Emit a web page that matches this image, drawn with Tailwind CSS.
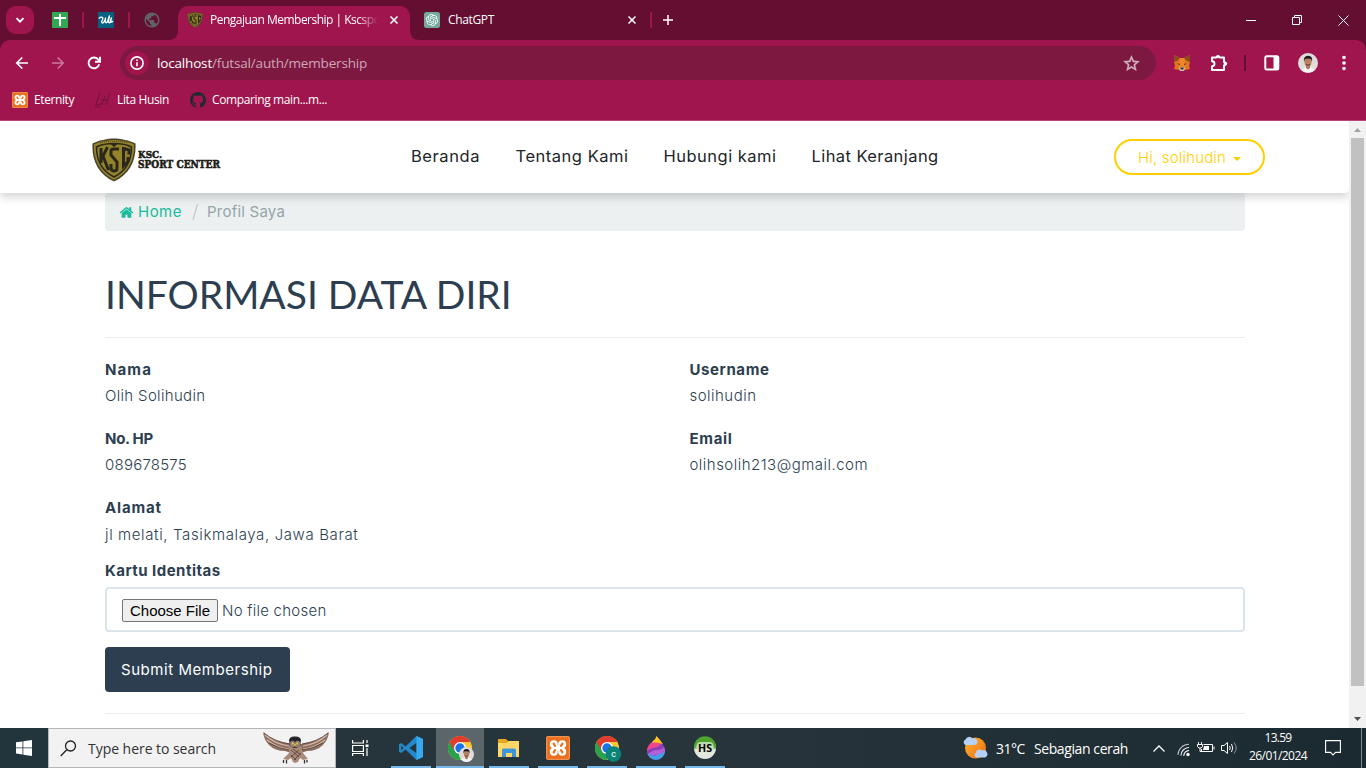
<!DOCTYPE html>
<html lang="id">
<head>
<meta charset="utf-8">
<title>Pengajuan Membership | Kscsport</title>
<script src="https://cdn.jsdelivr.net/npm/@tailwindcss/browser@4"></script>
</head>
<body class="w-[1366px] h-[768px] overflow-hidden bg-white flex flex-col whitespace-nowrap">
<svg width="0" height="0" class="absolute">
  <defs>
    <symbol id="shield" viewBox="0 0 44 44">
      <path d="M22 .5C28 .5 38 2.500 43.500 5.500C44.500 22 38 36 22 43.500C6 36-.5 22 .5 5.500C6 2.500 16 .5 22 .5Z" fill="#4b4527"/>
      <path d="M22 2C28 2 37 3.500 42 6.500C42.500 21 37 34.500 22 41.800C7 34.500 1.500 21 2 6.500C7 3.500 16 2 22 2Z" fill="#94832d"/>
      <path d="M4.500 9C9 6.500 15 5.500 22 5.500S35 6.500 39.500 9C39.500 22 35 32.500 22 39C9 32.500 4.500 22 4.500 9Z" fill="none" stroke="#2b2819" stroke-width="1.500"/>
      <path d="M9 10V25M15.500 9L11 18L16.500 32M27 11H21.500Q19 11 19 13.500V17L25 24V30Q25 33 22 33Q19 33 19 29.500V26M37 16.500V12L31.500 10.500V28L36 23.500V19" fill="none" stroke="#2b2819" stroke-width="3"/>
      <path d="M18.500 6H25.500L22 9Z" fill="#2b2819"/>
      <path d="M8 4.800Q22 1.500 36 4.800" fill="none" stroke="#3a3520" stroke-width="1" stroke-dasharray="1 1"/>
    </symbol>
    <symbol id="xampp" viewBox="0 0 24 24">
      <rect width="24" height="24" rx="2" fill="#e8701f"/><rect x=".7" y=".7" width="22.600" height="22.600" rx="1.500" fill="none" stroke="#f0995c" stroke-width="1"/>
      <g fill="#fff"><circle cx="7.800" cy="8.200" r="4"/><circle cx="16.200" cy="8.200" r="4"/><circle cx="7.800" cy="15.800" r="4"/><circle cx="16.200" cy="15.800" r="4"/><rect x="6.500" y="9.500" width="11" height="5"/></g>
      <path d="M7.600 7.600L9 9.800M16.400 7.600L15 9.800M7.600 16.400L9 14.200M16.400 16.400L15 14.200" stroke="#e8701f" stroke-width="2.200" stroke-linecap="round"/>
    </symbol>
    <symbol id="chrome" viewBox="0 0 24 24">
      <circle cx="12" cy="12" r="12" fill="#fcc934"/>
      <path d="M12 12L1.600 6A12 12 0 0 0 12 24L17.200 15Z" fill="#2aa24c"/>
      <path d="M1.600 6A12 12 0 0 1 22.400 6H12L6.800 15Z" fill="#e33b2e"/>
      <circle cx="12" cy="12" r="6" fill="#fff"/><circle cx="12" cy="12" r="4.700" fill="#1a73e8"/>
    </symbol>
    <symbol id="avatar" viewBox="0 0 20 20">
      <circle cx="10" cy="10" r="10" fill="#dfdcd9"/>
      <path d="M3 17Q5 14 10 14T17 17A10 10 0 0 1 3 17Z" fill="#f4f4f4"/>
      <path d="M8 12H12V15L10 16.500L8 15Z" fill="#a9785b"/>
      <ellipse cx="10" cy="9" rx="3.500" ry="5" fill="#b98263"/>
      <path d="M6 9Q5 3 10 2.800T14 9L13 6Q10 5 7 6Z" fill="#1e1a1b"/>
      <path d="M8 11.500Q10 13 12 11.500" stroke="#5b352c" fill="none"/>
    </symbol>
  </defs>
</svg>

<!-- Browser window frame -->
<div class="h-[121px] bg-[#640e32] border-b border-[#b9457a] text-white font-['Open_Sans',sans-serif] text-[12px] flex flex-col shrink-0">
  <div class="h-10 flex items-center pl-1.5">
    <div class="w-7 h-7 rounded-[10px] bg-[#a1154e] flex items-center justify-center"><svg width="10" height="10" viewBox="0 0 10 10" fill="none" stroke="#fff" stroke-width="1.900"><path d="M1.500 3.200L5 6.700L8.500 3.200"/></svg></div>
    <svg class="ml-[18px]" width="16" height="16" viewBox="0 0 16 16"><rect width="16" height="16" rx="1" fill="#31a853"/><path d="M8 2V14M2 6H14" stroke="#fff" stroke-width="2"/></svg>
    <i class="w-0.5 h-4 bg-[#a1154e] ml-3.5"></i>
    <svg class="ml-3.5" width="16" height="16" viewBox="0 0 16 16"><rect width="16" height="16" fill="#066080"/><path d="M.8 6.500Q3.500 4.200 4.500 5.500T3.600 9.500Q3.800 12 5.500 10.500T7.600 5.500L7.200 9.500Q7.600 12 9.500 9.500L11.500 3.500L10.500 9.500Q11 12 12.200 10L13.500 5.500L12.800 9.500Q13 11 15 9" fill="none" stroke="#fff" stroke-width="1.300"/></svg>
    <i class="w-0.5 h-4 bg-[#a1154e] ml-3.5"></i>
    <svg class="ml-[13px]" width="18" height="18" viewBox="0 0 24 24" fill="#5f6368"><path d="M12 2C6.480 2 2 6.480 2 12s4.480 10 10 10 10-4.480 10-10S17.520 2 12 2zm-1 17.930c-3.950-.49-7-3.850-7-7.930 0-.62.080-1.210.210-1.790L9 15v1c0 1.100.9 2 2 2v1.930zm6.900-2.540c-.26-.81-1-1.390-1.900-1.390h-1v-3c0-.55-.45-1-1-1H8v-2h2c.55 0 1-.45 1-1V7h2c1.100 0 2-.9 2-2v-.41c2.930 1.190 5 4.060 5 7.410 0 2.080-.8 3.970-2.100 5.390z"/></svg>
    <svg class="self-end ml-[7px]" width="10" height="10"><path d="M10 0V10H0Q10 10 10 0Z" fill="#a1154e"/></svg>
    <div class="self-end h-[34px] w-[232px] rounded-t-[10px] bg-[#a1154e] flex items-center pl-[9px] pb-1.5">
      <svg class="shrink-0" width="16" height="16"><use href="#shield"/></svg>
      <div class="ml-[7px] w-[168px] shrink-0 overflow-hidden tracking-[-0.51px] [mask-image:linear-gradient(to_right,black_88%,transparent)]">Pengajuan Membership | Kscsport</div>
      <svg class="ml-[11px] shrink-0" width="10" height="10" viewBox="0 0 10 10" stroke="#fff" stroke-width="1.600"><path d="M1.500 1.500L8.500 8.500M8.500 1.500L1.500 8.500"/></svg>
    </div>
    <svg class="self-end" width="10" height="10"><path d="M0 0V10H10Q0 10 0 0Z" fill="#a1154e"/></svg>
    <svg class="ml-1" width="16" height="16" viewBox="0 0 32 32"><rect width="32" height="32" rx="5" fill="#74aa9c"/><g transform="translate(4 4)"><path fill="#fff" d="M22.2819 9.8211a5.9847 5.9847 0 0 0-.5157-4.9108 6.0462 6.0462 0 0 0-6.5098-2.9A6.0651 6.0651 0 0 0 4.9807 4.1818a5.9847 5.9847 0 0 0-3.9977 2.9 6.0462 6.0462 0 0 0 .7427 7.0966 5.98 5.98 0 0 0 .511 4.9107 6.051 6.051 0 0 0 6.5146 2.9001A5.9847 5.9847 0 0 0 13.2599 24a6.0557 6.0557 0 0 0 5.7718-4.2058 5.9894 5.9894 0 0 0 3.9977-2.9001 6.0557 6.0557 0 0 0-.7475-7.0729zm-9.022 12.6081a4.4755 4.4755 0 0 1-2.8764-1.0408l.1419-.0804 4.7783-2.7582a.7948.7948 0 0 0 .3927-.6813v-6.7369l2.02 1.1686a.071.071 0 0 1 .038.052v5.5826a4.504 4.504 0 0 1-4.4945 4.4944zm-9.6607-4.1254a4.4708 4.4708 0 0 1-.5346-3.0137l.142.0852 4.783 2.7582a.7712.7712 0 0 0 .7806 0l5.8428-3.3685v2.3324a.0804.0804 0 0 1-.0332.0615L9.74 19.9502a4.4992 4.4992 0 0 1-6.1408-1.6464zM2.3408 7.8956a4.485 4.485 0 0 1 2.3655-1.9728V11.6a.7664.7664 0 0 0 .3879.6765l5.8144 3.3543-2.0201 1.1685a.0757.0757 0 0 1-.071 0l-4.8303-2.7865A4.504 4.504 0 0 1 2.3408 7.872zm16.5963 3.8558L13.1038 8.364 15.1192 7.2a.0757.0757 0 0 1 .071 0l4.8303 2.7913a4.4944 4.4944 0 0 1-.6765 8.1042v-5.6772a.79.79 0 0 0-.407-.667zm2.0107-3.0231l-.142-.0852-4.7735-2.7818a.7759.7759 0 0 0-.7854 0L9.409 9.2297V6.8974a.0662.0662 0 0 1 .0284-.0615l4.8303-2.7866a4.4992 4.4992 0 0 1 6.6802 4.66zM8.3065 12.863l-2.02-1.1638a.0804.0804 0 0 1-.038-.0567V6.0742a4.4992 4.4992 0 0 1 7.3757-3.4537l-.142.0805L8.704 5.459a.7948.7948 0 0 0-.3927.6813zm1.0976-2.3654l2.602-1.4998 2.6069 1.4998v2.9994l-2.5974 1.4997-2.6067-1.4997Z"/></g></svg>
    <div class="ml-2 w-[179px] tracking-[-0.35px]">ChatGPT</div>
    <svg width="10" height="10" viewBox="0 0 10 10" stroke="#fff" stroke-width="1.500"><path d="M1.500 1.500L8.500 8.500M8.500 1.500L1.500 8.500"/></svg>
    <i class="w-0.5 h-4 bg-[#a1154e] ml-[13px]"></i>
    <svg class="ml-[11px]" width="10" height="10" viewBox="0 0 10 10" stroke="#fff" stroke-width="1.500"><path d="M5 0V10M0 5H10"/></svg>
    <svg class="ml-[573px]" width="10" height="10" stroke="#fff"><path d="M0 5.500H10"/></svg>
    <svg class="ml-9" width="10" height="10" fill="none" stroke="#fff"><path d="M.5 2.500H7.500V9.500H.5ZM2.500 2.500V.5H9.500V7.500H7.500"/></svg>
    <svg class="ml-9" width="11" height="11" stroke="#fff"><path d="M.5.5L10.500 10.500M10.500.5L.5 10.500"/></svg>
  </div>
  <div class="h-20 bg-[#a1154e] rounded-t-[10px]">
    <div class="h-[46px] flex items-center pl-[15px]">
      <svg width="14" height="14" viewBox="0 0 14 14" fill="none" stroke="#fff" stroke-width="1.700"><path d="M13 7H2M7.300 1.500L1.800 7L7.300 12.500"/></svg>
      <svg class="ml-[22px]" width="14" height="14" viewBox="0 0 14 14" fill="none" stroke="#cc7a9b" stroke-width="1.500"><path d="M1 7H12M6.700 1.500L12.200 7L6.700 12.500"/></svg>
      <svg class="ml-[21px]" width="16" height="16" viewBox="0 0 16 16" fill="none" stroke="#fff" stroke-width="1.900"><path d="M13.200 9.200A5.400 5.400 0 1 1 12.400 4.800L13.700 6.500M14 1.800V6.800H9"/></svg>
      <div class="ml-[18px] w-[1036px] h-[34px] rounded-full bg-[#7d1941] flex items-center pl-[5px]">
        <div class="w-6 h-6 rounded-full bg-[#a1154e] flex items-center justify-center"><svg width="14" height="14" viewBox="0 0 14 14" fill="none" stroke="#fff" stroke-width="1.600"><circle cx="7" cy="7" r="6.100"/><path d="M7 6.200V10.300M7 3.500V5.100"/></svg></div>
        <div class="ml-2 w-[965px] text-[13.5px] tracking-[-0.17px] text-[#cfa6b7]"><span class="text-white">localhost</span>/futsal/auth/membership</div>
        <svg width="19" height="19" viewBox="0 0 24 24" fill="#d4b3c0" stroke="#d4b3c0" stroke-width=".5"><path d="M22 9.240l-7.190-.62L12 2 9.190 8.630 2 9.240l5.460 4.730L5.820 21 12 17.270 18.180 21l-1.630-7.030L22 9.240zM12 15.400l-3.760 2.270 1-4.280-3.320-2.880 4.380-.38L12 6.100l1.710 4.040 4.380.38-3.320 2.880 1 4.280L12 15.400z"/></svg>
      </div>
      <svg class="ml-[17px]" width="18" height="18" viewBox="0 0 18 18"><path d="M1 1L7 4H11L17 1V8L16 12L17 15L12 16H6L1 15L2 12L1 8Z" fill="#e2761b"/><path d="M1 1L7 4L4 7L1 8ZM17 1L11 4L14 7L17 8Z" fill="#8a4b20"/><path d="M7 4H11L12.500 13L11 15H7L5.500 13Z" fill="#f0862a"/><path d="M4.500 9L7 10L6.500 11.500ZM13.500 9L11 10L11.500 11.500Z" fill="#3b3a45"/><path d="M6 14L7.500 13.500H10.500L12 14L11 17H7Z" fill="#d7c1b3"/><path d="M7.500 13.500H10.500V15.500H7.500Z" fill="#23344a"/></svg>
      <svg class="ml-[19px]" width="18" height="18" viewBox="0 0 18 18"><path d="M2 3.500H6.300A1.800 1.800 0 0 1 9.700 3.500H14V8A1.600 1.600 0 0 1 14 11.300V16H2V12.300A2.300 2.300 0 0 0 2 7.300Z" fill="none" stroke="#fff" stroke-width="1.900" stroke-linejoin="round"/><circle cx="15.500" cy="9.600" r="1.700" fill="#fff"/><circle cx="8" cy="2.600" r="1.700" fill="#fff"/></svg>
      <i class="w-0.5 h-4 bg-[#640e32] ml-4"></i>
      <svg class="ml-[18px]" width="16" height="16" viewBox="0 0 16 16"><rect x="1.300" y="1.300" width="13" height="13.200" rx="1.500" fill="none" stroke="#fff" stroke-width="2"/><path d="M9.500 1H15V15H9.500Z" fill="#fff"/></svg>
      <svg class="ml-[18px]" width="20" height="20"><use href="#avatar"/></svg>
      <svg class="ml-6" width="4" height="16" fill="#fff"><circle cx="2" cy="2.500" r="1.800"/><circle cx="2" cy="8" r="1.800"/><circle cx="2" cy="13.500" r="1.800"/></svg>
    </div>
    <div class="h-7 flex items-center pl-3">
      <svg width="16" height="16"><use href="#xampp"/></svg>
      <div class="ml-1.5 w-[60px] tracking-[-0.41px]">Eternity</div>
      <svg width="18" height="16" viewBox="0 0 18 16" fill="none" stroke="#6d1238" stroke-width="1"><path d="M6 1L2 12Q0 14 8 11.500M7 8H13M11 4L8 13M16 1L12 13M1 15H7M16 14H17"/></svg>
      <div class="ml-[5px] w-[73px] tracking-[-0.37px]">Lita Husin</div>
      <svg width="16" height="16" fill="#24292f"><path d="M8 0C3.580 0 0 3.580 0 8c0 3.540 2.290 6.530 5.470 7.590.4.070.55-.17.55-.38 0-.19-.01-.82-.01-1.490-2.010.37-2.530-.49-2.690-.94-.09-.23-.48-.94-.82-1.130-.28-.15-.68-.52-.01-.53.63-.01 1.080.58 1.230.82.72 1.210 1.870.87 2.330.66.070-.52.28-.87.51-1.070-1.780-.2-3.640-.89-3.640-3.950 0-.87.310-1.590.82-2.150-.08-.2-.36-1.020.08-2.120 0 0 .67-.21 2.200.82.64-.18 1.320-.27 2-.27s1.360.09 2 .27c1.530-1.040 2.200-.82 2.200-.82.44 1.100.16 1.920.08 2.120.51.56.82 1.270.82 2.150 0 3.070-1.870 3.750-3.650 3.950.29.25.54.73.54 1.480 0 1.070-.01 1.930-.01 2.200 0 .21.15.46.55.38A8.010 8.010 0 0 0 16 8c0-4.420-3.580-8-8-8z"/></svg>
      <div class="ml-1.5 tracking-[-0.38px]">Comparing main...m...</div>
    </div>
  </div>
</div>

<!-- Web page -->
<div class="flex h-[607px] shrink-0 font-[Inter,sans-serif]">
  <div class="w-[1349px] overflow-hidden">
    <header class="relative z-10 h-[72px] bg-white rounded-r-[4px] shadow-[0_4px_10px_rgba(0,0,0,0.18)] flex items-center pl-[92px] text-[16px] text-[#212529]">
      <svg width="134" height="44" class="mt-1.5" viewBox="0 0 134 44"><use href="#shield" width="44" height="44"/>
        <g font-family="DejaVu Serif" font-weight="bold" fill="#211e1a" stroke="#211e1a" stroke-width=".6"><text x="46" y="19.500" font-size="10" textLength="24" lengthAdjust="spacingAndGlyphs">KSC.</text><text x="46" y="29.800" font-size="11" textLength="82" lengthAdjust="spacingAndGlyphs">SPORT CENTER</text></g></svg>
      <nav class="flex ml-[185px] pb-0.5 text-[16.5px]">
        <a class="w-[104.5px] tracking-[0.57px]">Beranda</a>
        <a class="w-[148px] tracking-[0.52px]">Tentang Kami</a>
        <a class="w-[148px] tracking-[0.49px]">Hubungi kami</a>
        <a class="w-[302.5px] tracking-[0.42px]">Lihat Keranjang</a>
      </nav>
      <button class="w-[151px] h-9 rounded-full border-2 border-[#ffd000] text-[#ffd000] text-[15px] flex items-center pl-[22px] pt-0.5 font-light"><span class="w-[88px] tracking-[0.18px] text-left">Hi, solihudin</span><svg class="ml-[7px] mt-0.5" width="8" height="4" fill="#ffd000"><path d="M0 0H8L4 4Z"/></svg></button>
    </header>
    <main class="ml-[105px] w-[1140px] text-[15px] font-light text-[#2c3e50]">
      <div class="h-[38px] rounded-[4px] bg-[#ecf0f1] flex items-center pl-3.5 text-[#95a5a6]">
        <svg width="16" height="15" viewBox="0 0 1792 1792" fill="#18bc9c"><path d="M1408 992v480q0 26-19 45t-45 19h-384v-384h-256v384h-384q-26 0-45-19t-19-45v-480q0-1 .5-3t.5-3l575-474 575 474q1 2 1 6zm223-69l-62 74q-8 9-21 11h-3q-13 0-21-7l-692-577-692 577q-12 8-24 7-13-2-21-11l-62-74q-8-10-7-23.500t11-21.500l719-599q32-26 76-26t76 26l244 204v-195q0-14 9-23t23-9h192q14 0 23 9t9 23v408l219 182q10 8 11 21.500t-7 23.500z"/></svg>
        <span class="w-[54px] ml-[3px] text-[#18bc9c] font-normal tracking-[0.49px]">Home</span>
        <svg width="8" height="18" class="mr-[7px]" fill="none" stroke="#c6cccd" stroke-width="1.300"><path d="M1 17L5.500 1"/></svg>
        <span class="font-normal tracking-[0.22px]">Profil Saya</span>
      </div>
      <h1 class="mt-[39px] h-12 leading-[48px] font-[Lato,sans-serif] font-normal text-[39px]">INFORMASI DATA DIRI</h1>
      <hr class="mt-[19px] border-[#ececec]">
      <div class="mt-[19px] grid grid-cols-[584.5px_1fr] leading-[26px]">
        <div class="h-[69px]"><b class="block font-bold tracking-[1.11px]">Nama</b><p class="tracking-[0.33px]">Olih Solihudin</p></div>
        <div class="h-[69px]"><b class="block font-bold tracking-[0.6px]">Username</b><p class="tracking-[0.48px]">solihudin</p></div>
        <div class="h-[69px]"><b class="block font-bold tracking-[-0.28px]">No. HP</b><p class="tracking-[0.23px]">089678575</p></div>
        <div class="h-[69px]"><b class="block font-bold tracking-[0.67px]">Email</b><p class="tracking-[0.48px]">olihsolih213@gmail.com</p></div>
        <div class="h-[63px] col-span-2"><b class="block font-bold tracking-[0.85px]">Alamat</b><p class="pt-px tracking-[0.62px]">jl melati, Tasikmalaya, Jawa Barat</p></div>
        <b class="block font-bold h-[29px] tracking-[0.47px]">Kartu Identitas</b>
      </div>
      <div class="h-[45px] rounded-[4px] border-2 border-[#dce4ec] flex items-center pl-[15px]">
        <button class="mt-0.5 w-24 h-[23px] shrink-0 rounded-[2px] border border-[#767676] bg-[#efefef] text-black font-['Liberation_Sans',Arial,sans-serif] font-normal leading-[21px]">Choose File</button>
        <span class="ml-1 mt-1 tracking-[0.25px]">No file chosen</span>
      </div>
      <button class="mt-[15px] w-[185px] h-[45px] rounded-[4px] bg-[#2c3e50] text-white font-normal block text-left pl-4 pt-0.5 tracking-[0.55px]">Submit Membership</button>
      <hr class="mt-[21px] border-[#ececec]">
    </main>
  </div>
  <div class="w-[17px] bg-[#f1f1f1] flex flex-col items-center">
    <svg width="17" height="17"><path d="M5 11H12L8.500 7Z" fill="#a3a3a3"/></svg>
    <div class="w-[13px] h-[548px] bg-[#c1c1c1]"></div>
    <svg class="mt-[25px]" width="17" height="17"><path d="M5 6H12L8.500 10Z" fill="#505050"/></svg>
  </div>
</div>

<!-- Desktop taskbar -->
<div class="h-10 shrink-0 bg-linear-to-r from-[#22343c] via-[#28353b] to-[#1b2a31] flex items-center text-white font-['Open_Sans',sans-serif] text-[14px]">
  <svg class="ml-4" width="16" height="16" fill="#fff"><path d="M0 2.300L6.500 1.400V7.500H0ZM7.300 1.300L16 0V7.500H7.300ZM0 8.300H6.500V14.500L0 13.600ZM7.300 8.300H16V16L7.300 14.700Z"/></svg>
  <div class="ml-4 w-72 h-10 bg-[#f2f2f2] border border-[#b4b7b8] flex items-center text-[#333]">
    <svg class="ml-[11px]" width="17" height="17" fill="none" stroke="#222" stroke-width="1.300"><circle cx="10.500" cy="6" r="5"/><path d="M7 9.500L.7 16"/></svg>
    <div class="ml-[11px] w-[175px] tracking-[-0.04px]">Type here to search</div>
    <svg width="66" height="34" viewBox="0 0 66 34"><path d="M0 1Q8 9 19 11L28 13H38L47 11Q58 9 66 1Q65 9 60 14Q54 20 44 20L38 22H28L22 20Q12 20 6 14Q1 9 0 1Z" fill="#8d7063"/><path d="M2 4Q12 13 26 15M4 9Q14 17 26 18M64 4Q54 13 40 15M62 9Q52 17 40 18" stroke="#d4b6a3" stroke-width="1.200" fill="none"/><path d="M1 2Q12 11 27 13M6 12Q16 18 27 19M65 2Q54 11 39 13M60 12Q50 18 39 19" stroke="#4f3d38" stroke-width=".8" fill="none"/><path d="M26 15H38L40 22L45 28L40 29L37 27L35 31L32 32L30 31L28 27L25 29L20 28L26 22Z" fill="#a98a78"/><path d="M28 19L36 26M30 18L38 24M28 24L33 29M36 19L28 26M38 22L31 29" stroke="#564039" stroke-width=".8"/><path d="M26 9Q27 5 32 5.500Q37 5 38 9L37 15Q32 19 27 15Z" fill="#26262a"/><ellipse cx="29.500" cy="13" rx="2.600" ry="3.200" fill="#8e8176"/><ellipse cx="34.500" cy="13" rx="2.600" ry="3.200" fill="#8e8176"/><circle cx="29.800" cy="12.500" r=".9" fill="#fc3"/><circle cx="34.200" cy="12.500" r=".9" fill="#fc3"/><path d="M31 13H33L32 17Z" fill="#e8b93a"/><path d="M20.500 29V32M23.500 29V32.500M41.500 29V32.500M44 29V31.500" stroke="#3a3030" stroke-width="1.300"/></svg>
  </div>
  <svg class="ml-4" width="17" height="16" fill="none" stroke="#fff" stroke-width="1.200"><path d="M.6 0V3H11.400V0M.6 5.500H11.400V11.500H.6ZM.6 16V13.500H11.400V16M15 0V3M15 8V16"/><path d="M13.500 4.500H16.500V7H13.500Z" fill="#fff" stroke="none"/></svg>
  <div class="ml-[18px] flex gap-px h-10">
    <div class="w-12 flex flex-col items-center"><svg class="mt-2" width="24" height="24"><path d="M17.500 0L24 3V21L17.500 24L6.500 13.600L2.300 17L0 15.800V8.200L2.300 7L6.500 10.400ZM17.500 6.700L10.500 12L17.500 17.300ZM2.200 9.800V14.200L4.600 12Z" fill="#2489ca" fill-rule="evenodd"/><path d="M17.500 0L24 3V21L17.500 24Z" fill="#36a9f0"/></svg><i class="mt-1.5 w-10 h-0.5 bg-[#76b9ed]"></i></div>
    <div class="w-12 flex flex-col items-center bg-[#5b666b]"><svg class="mt-2 ml-1" width="28" height="26"><use href="#chrome" width="24" height="24"/><use href="#avatar" x="11" y="11" width="15" height="15"/></svg><i class="mt-1 w-12 h-0.5 bg-[#76b9ed]"></i></div>
    <div class="w-12 flex flex-col items-center"><svg class="mt-2" width="24" height="24"><path d="M1 3H9L11 5H21Q22 5 22 6V21H1Z" fill="#e9a820"/><path d="M1 7H10L12 5H22V21H1Z" fill="#ffd766"/><path d="M5 21V14Q5 12.500 6.500 12.500H17.500Q19 12.500 19 14V21H15V17H9V21Z" fill="#3d95dc"/></svg><i class="mt-1.5 w-10 h-0.5 bg-[#76b9ed]"></i></div>
    <div class="w-12 flex flex-col items-center"><svg class="mt-2" width="24" height="24"><use href="#xampp"/></svg><i class="mt-1.5 w-10 h-0.5 bg-[#76b9ed]"></i></div>
    <div class="w-12 flex flex-col items-center"><svg class="mt-2 ml-1" width="28" height="26"><use href="#chrome" width="24" height="24"/><circle cx="18.500" cy="18" r="7.800" fill="#0b8378"/><text x="18.500" y="21.300" font-size="9" text-anchor="middle" fill="#fff" font-family="Roboto">c</text></svg><i class="mt-1 w-10 h-0.5 bg-[#76b9ed]"></i></div>
    <div class="w-12 flex flex-col items-center"><svg class="mt-2" width="24" height="24"><clipPath id="drop"><path d="M12.500 0Q21 9 21 15A9 9 0 0 1 3 15Q3 10 9 5Q12 3 12.500 0Z"/></clipPath><g clip-path="url(#drop)"><path d="M0 0H24V24H0Z" fill="#8b3dbb"/><path d="M9 0H18L20 8Q14 7 8 8Z" fill="#ffc61a"/><path d="M2 15V8Q13 5 17 8Q14 12 8 12Q5 13 2 16Z" fill="#f0468b"/><path d="M2 20Q8 14 13 14T22 9V15Q18 20 13 19T5 24Z" fill="#b45fd6"/><path d="M2 15Q6 21 13 19T22 14V24H3Z" fill="#3f9ee5"/></g></svg><i class="mt-1.5 w-10 h-0.5 bg-[#76b9ed]"></i></div>
    <div class="w-12 flex flex-col items-center"><svg class="mt-2" width="24" height="24"><circle cx="12" cy="12" r="11" fill="#e3e6e1"/><path d="M1 12A11 11 0 0 1 23 12Q12 4 1 12Z" fill="#4fa32c"/><path d="M1 11A11 11 0 0 1 23 11V13H1Z" fill="#4fa32c" opacity=".65"/><rect x="3.500" y="6" width="17" height="12" rx="4" fill="#dcebd3" opacity=".75"/><text x="12" y="16" font-size="11" text-anchor="middle" font-weight="bold" font-family="Open Sans" textLength="14" lengthAdjust="spacingAndGlyphs">HS</text></svg><i class="mt-1.5 w-10 h-0.5 bg-[#76b9ed]"></i></div>
  </div>
  <svg class="ml-[233px]" width="26" height="24"><defs><linearGradient id="sun" x2="1" y2="1"><stop stop-color="#ffb62e"/><stop offset="1" stop-color="#ef6a12"/></linearGradient></defs><circle cx="13.500" cy="12" r="10.500" fill="url(#sun)"/><path d="M3.500 9A3 3 0 0 1 3.500 3.500A4 4 0 0 1 10.500 2.500A3.200 3.200 0 0 1 13 9ZM14 21.500A3 3 0 0 1 14 16.500A3.500 3.500 0 0 1 20 14.500A3.200 3.200 0 0 1 23 21.500Z" fill="#b5d0f7"/></svg>
  <div class="ml-2 w-[38px] tracking-[-0.46px]">31°C</div>
  <div class="w-[119px] tracking-[-0.41px]">Sebagian cerah</div>
  <svg width="12" height="7" fill="none" stroke="#fff" stroke-width="1.300"><path d="M.5 6.500L6 1L11.500 6.500"/></svg>
  <svg class="ml-3 mt-1" width="14" height="14" fill="none" stroke="#fff" stroke-width="1.100"><path d="M1 12A11 11 0 0 1 12 1.200" stroke="#b7bec1"/><path d="M4 12.500A8 8 0 0 1 12 4.500M6.800 13A5.300 5.300 0 0 1 12 7.500"/><circle cx="11" cy="11.500" r="1.700" fill="#fff" stroke="none"/></svg>
  <svg class="ml-1.5" width="18" height="12" fill="none" stroke="#fff"><path d="M6.500 2.500H15.500V9.500H4.500V7M17 4.500V7.500M1.500 0V2.500M4.500 0V2.500M.5 2.500H5.500V4.500L4 6H2L.5 4.500ZM3 6V9.500H5"/><path d="M7 4H12V8H6Z" fill="#fff" stroke="none"/></svg>
  <svg class="ml-1.5" width="17" height="14" fill="none" stroke="#fff"><path d="M.5 4.500H3L6.500 1.500V12.500L3 9.500H.5ZM8.500 5Q10 7 8.500 9M10.500 3Q13 7 10.500 11"/><path d="M13 1.500Q17.500 7 13 12.500" stroke="#89959a"/></svg>
  <div class="ml-1 w-[72px] text-center text-[12px] leading-[18px] pb-0.5"><div class="tracking-[-0.75px]">13.59</div><div class="tracking-[-0.57px]">26/01/2024</div></div>
  <svg class="ml-[11px]" width="16" height="16" fill="none" stroke="#fff" stroke-width="1.100"><path d="M.6.6H15.400V12.400H10.500L8 15L5.500 12.400H.6Z"/></svg>
  <i class="ml-5 w-px h-10 bg-[#7e898e]"></i>
</div>
</body>
</html>
